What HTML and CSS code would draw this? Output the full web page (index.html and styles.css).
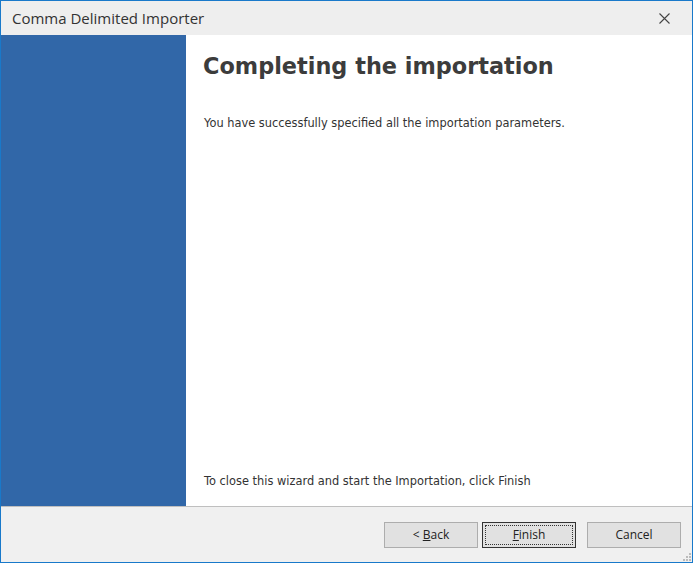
FILE: index.html
```html
<!DOCTYPE html>
<html>
<head>
<meta charset="utf-8">
<link rel="stylesheet" href="styles.css">
</head>
<body>
<div class="window">
  <div class="titlebar">
    <span class="title">Comma Delimited Importer</span>
    <span class="close">
      <svg width="11" height="11" viewBox="0 0 11 11"><path d="M0.5 0.5 L10.5 10.5 M10.5 0.5 L0.5 10.5" stroke="#444" stroke-width="1.1" fill="none"/></svg>
    </span>
  </div>
  <div class="main">
    <div class="side"></div>
    <div class="content">
      <h1 class="heading">Completing the importation</h1>
      <p class="msg">You have successfully specified all the importation parameters.</p>
      <p class="msg bottom">To close this wizard and start the Importation, click Finish</p>
    </div>
  </div>
  <div class="footer">
    <button class="btn"><span>&lt; <u>B</u>ack</span></button>
    <button class="btn default"><span class="focus"><span><u>F</u>inish</span></span></button>
    <button class="btn cancel"><span>Cancel</span></button>
    <svg class="grip" width="8" height="8" viewBox="0 0 8 8">
      <rect x="6" y="0" width="2" height="2" fill="#bbb"/>
      <rect x="3" y="3" width="2" height="2" fill="#bbb"/>
      <rect x="6" y="3" width="2" height="2" fill="#bbb"/>
      <rect x="0" y="6" width="2" height="2" fill="#bbb"/>
      <rect x="3" y="6" width="2" height="2" fill="#bbb"/>
      <rect x="6" y="6" width="2" height="2" fill="#bbb"/>
    </svg>
  </div>
</div>
</body>
</html>
```
FILE: styles.css
```css
* { box-sizing: border-box; }
html, body { margin: 0; padding: 0; }
body { width: 693px; height: 563px; overflow: hidden; }
.window {
  width: 693px; height: 563px;
  border: 1px solid #1979ca;
  display: flex; flex-direction: column;
  background: #fff;
}
.titlebar {
  height: 34px; flex: none;
  background: #eeeeee;
  display: flex; align-items: center; justify-content: space-between;
  padding: 0 22px 0 11px;
}
.title {
  font-family: "Open Sans", "Noto Sans", sans-serif;
  font-size: 15px; color: #333;
}
.close { display: flex; width: 11px; height: 11px; }
.main { flex: 1; display: flex; min-height: 0; }
.side { width: 185px; background: #3167a8; flex: none; }
.content {
  flex: 1; display: flex; flex-direction: column;
  padding: 14px 16px 18px 17px;
}
.heading {
  margin: 0;
  font-family: "DejaVu Sans", Verdana, sans-serif;
  font-weight: bold; font-size: 22.4px; color: #3c3c3c;
  line-height: 34px;
}
.msg {
  margin: 0 0 0 1px;
  font-family: "DejaVu Sans", Verdana, sans-serif;
  font-size: 11.4px; color: #333;
}
.heading + .msg { margin-top: 33px; }
.msg.bottom { margin-top: auto; }
.footer {
  height: 56px; flex: none;
  background: #f0f0f0;
  border-top: 1px solid #bfbfbf;
  display: flex; align-items: center; justify-content: flex-end;
  padding: 0 11px 0 0;
  gap: 4px;
  position: relative;
}
.btn {
  width: 94px; height: 26px;
  background: #e1e1e1;
  border: 1px solid #adadad;
  font-family: "Open Sans", "Noto Sans", sans-serif;
  font-size: 12px; color: #222;
  padding: 0;
  display: flex; align-items: center; justify-content: center;
}
.btn.default { border: 1px solid #333; padding: 2px; }
.focus {
  width: 100%; height: 100%;
  border: 1px dotted #333;
  display: flex; align-items: center; justify-content: center;
}
.btn.cancel { margin-left: 7px; }
.grip { position: absolute; right: 1px; bottom: 1px; }
```
